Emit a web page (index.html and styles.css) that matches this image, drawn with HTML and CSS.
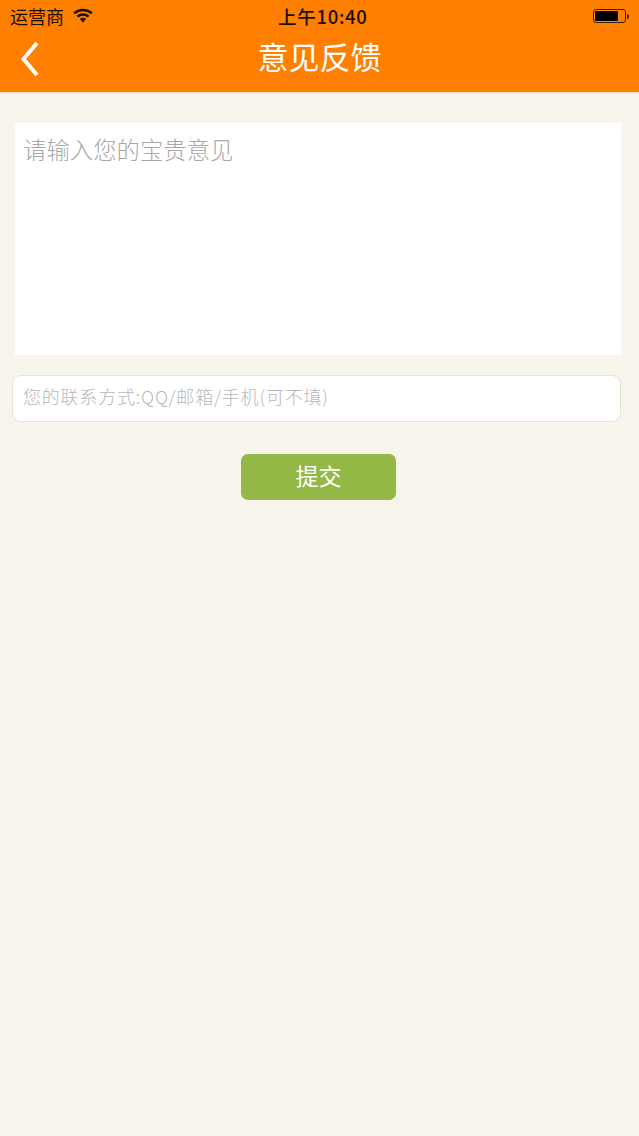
FILE: index.html
```html
<!DOCTYPE html>
<html lang="zh-CN">

<head>
    <meta charset="UTF-8">
    <meta name="viewport" content="width=device-width, initial-scale=1.0">
    <title>意见反馈</title>
    <link rel="stylesheet" href="styles.css">
</head>

<body>
    <div class="header">
        <div class="status-bar">
            <div class="status-left">
                <span class="carrier">运营商</span>
                <svg class="wifi" width="20" height="15" viewBox="0 0 20 15">
                    <path d="M1.2 5.4 A13 13 0 0 1 18.8 5.4" fill="none" stroke="#1a0f00" stroke-width="2.6" />
                    <path d="M4.4 8.6 A8.4 8.4 0 0 1 15.6 8.6" fill="none" stroke="#1a0f00" stroke-width="2.6" />
                    <path d="M6.8 11 L10 14.6 L13.2 11 A4.6 4.6 0 0 0 6.8 11 Z" fill="#1a0f00" />
                </svg>
            </div>
            <div class="clock">上午10:40</div>
            <div class="battery">
                <div class="battery-body">
                    <div class="battery-level"></div>
                </div>
                <div class="battery-tip"></div>
            </div>
        </div>
        <div class="nav-bar">
            <a class="back" href="#">
                <svg width="20" height="36" viewBox="0 0 20 36">
                    <path d="M17 2 L3.5 18 L17 34" fill="none" stroke="#fff" stroke-width="4" />
                </svg>
            </a>
            <h1>意见反馈</h1>
        </div>
    </div>

    <div class="content">
        <div class="feedback-box">请输入您的宝贵意见</div>
        <div class="contact-box">您的联系方式:QQ/邮箱/手机(可不填)</div>
        <button class="submit">提交</button>
    </div>
</body>

</html>
```

FILE: styles.css
```css
body {
    margin: 0;
    height: 1136px;
    overflow: hidden;
    background-color: #f7f4eb;
    font-family: "Noto Sans CJK SC", "Liberation Sans", sans-serif;
}

.header {
    height: 92px;
    background-color: #ff8000;
    box-shadow: 0 1px 1px rgba(160, 120, 60, 0.2);
}

.status-bar {
    height: 32px;
    padding: 0 10px;
    position: relative;
    display: flex;
    align-items: center;
    justify-content: space-between;
    color: #1a0f00;
}

.status-left {
    display: flex;
    align-items: center;
    gap: 9px;
}

.carrier {
    font-size: 18px;
    line-height: 32px;
}

.wifi {
    margin-top: -2px;
}

.clock {
    position: absolute;
    left: 278px;
    top: 0;
    font-size: 18.5px;
    line-height: 32px;
    font-weight: 500;
    letter-spacing: 0.7px;
}

.battery {
    display: flex;
    align-items: center;
}

.battery-body {
    width: 33px;
    height: 14px;
    box-sizing: border-box;
    border: 1px solid #3a2000;
    border-radius: 3px;
    padding: 1px;
}

.battery-level {
    width: 23px;
    height: 100%;
    background-color: #000;
    border-radius: 1px;
}

.battery-tip {
    width: 2px;
    height: 5px;
    margin-left: 1px;
    background-color: #3a2000;
    border-radius: 0 2px 2px 0;
}

.nav-bar {
    height: 60px;
    position: relative;
}

.nav-bar h1 {
    margin: 0;
    text-align: center;
    font-size: 31px;
    line-height: 48px;
    font-weight: 400;
    color: #fff;
}

.back {
    position: absolute;
    left: 20px;
    top: 9px;
}

.content {
    padding: 31px 18px 0 15px;
}

.feedback-box {
    height: 232px;
    box-sizing: border-box;
    padding: 9px 8px;
    background-color: #fff;
    font-size: 23.4px;
    line-height: 34px;
    font-weight: 300;
    color: #a8a8ac;
}

.contact-box {
    height: 47px;
    box-sizing: border-box;
    margin: 20px 0 0 -3px;
    padding: 0 10px;
    background-color: #fff;
    border: 1px solid #e6e3da;
    border-radius: 9px;
    font-size: 18px;
    line-height: 41px;
    font-weight: 300;
    letter-spacing: 0.8px;
    color: #b8b8bc;
}

.submit {
    display: block;
    width: 155px;
    height: 46px;
    margin: 32px 0 0 226px;
    padding: 0 0 4px;
    background-color: #94b845;
    color: #fff;
    border: none;
    border-radius: 7px;
    font-family: inherit;
    font-size: 23px;
    font-weight: 400;
}
```
